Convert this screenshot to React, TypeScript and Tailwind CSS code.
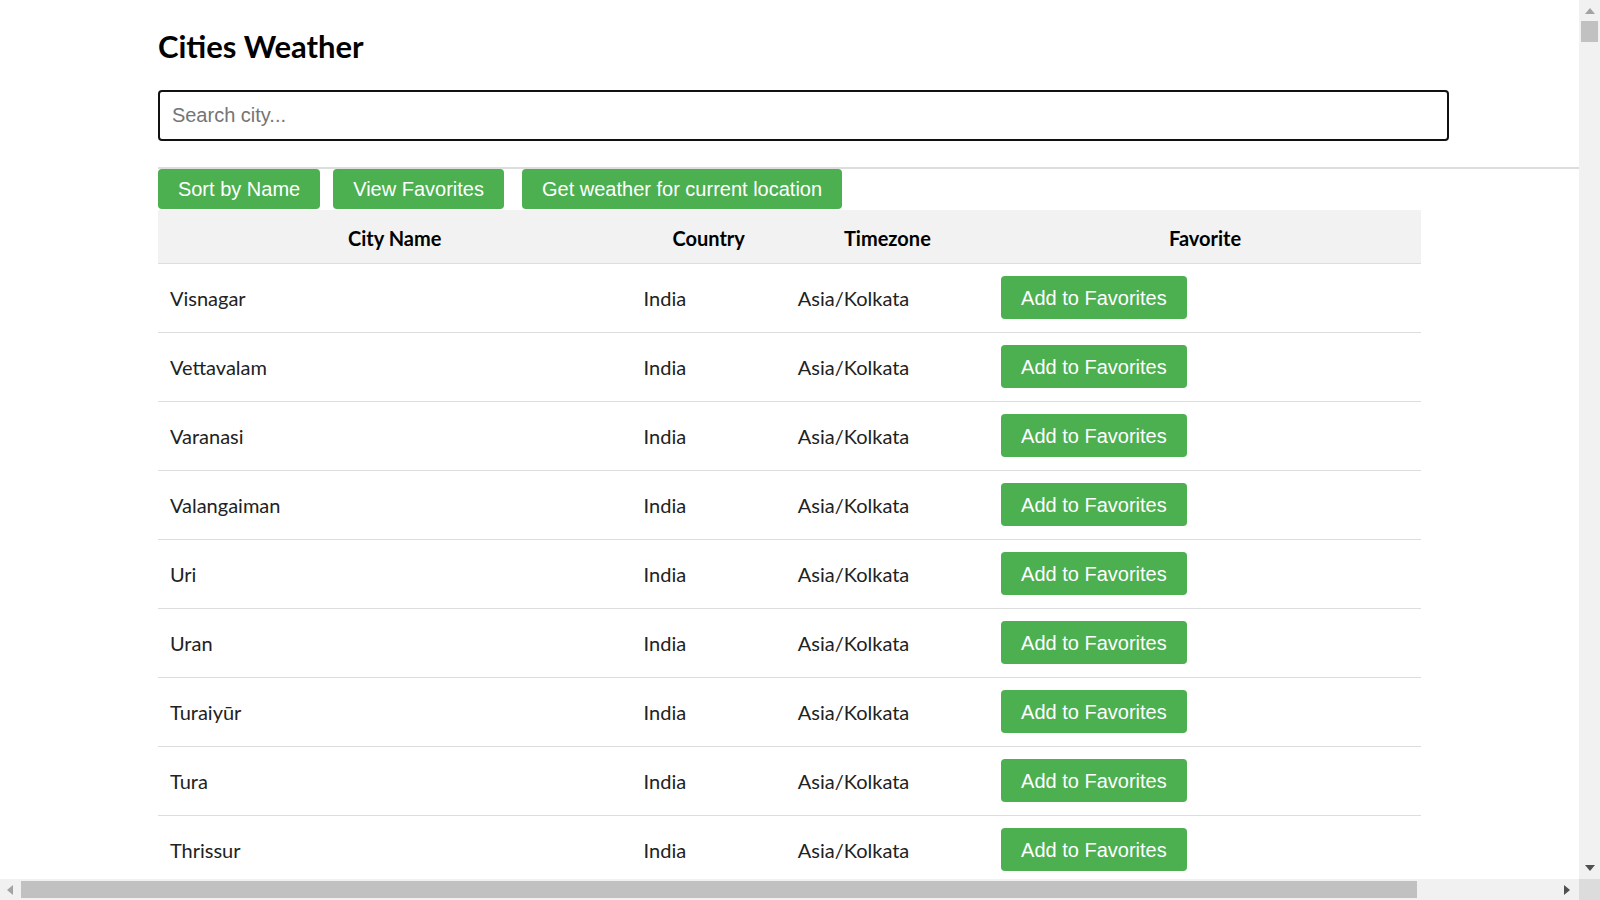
const cityNames = [
  "Visnagar",
  "Vettavalam",
  "Varanasi",
  "Valangaiman",
  "Uri",
  "Uran",
  "Turaiyūr",
  "Tura",
  "Thrissur",
  "Thoothukudi",
  "Thiruvananthapuram",
  "Thanjavur",
  "Thane",
  "Tezpur",
  "Tenkasi",
  "Surat",
  "Srinagar",
  "Sonipat",
  "Solapur",
  "Shimla",
  "Shillong",
  "Salem",
  "Rourkela",
  "Rewa",
  "Rajkot",
  "Raipur",
  "Pune",
  "Puducherry",
  "Patna",
  "Panaji",
];

// long list, so the page scrolls like the real one
const cities = Array.from({ length: 530 }, (_, i) => ({
  name: cityNames[i % cityNames.length],
  country: "India",
  timezone: "Asia/Kolkata",
}));

// window scrollbars as seen in the screenshot
function Scrollbars() {
  return (
    <>
      <div className="fixed top-0 right-0 w-[21px] h-[879px] bg-[#f1f1f1] flex flex-col items-center">
        <svg width="10" height="6" viewBox="0 0 10 6" className="mt-[8px]">
          <path d="M5 0L10 6H0z" fill="#a3a3a3" />
        </svg>
        <div className="mt-[7px] w-[17px] h-[21px] bg-[#c1c1c1]" />
        <div className="flex-1" />
        <svg width="10" height="6" viewBox="0 0 10 6" className="mb-[8px]">
          <path d="M0 0H10L5 6z" fill="#505050" />
        </svg>
      </div>
      <div className="fixed bottom-0 left-0 w-[1579px] h-[21px] bg-[#f1f1f1] flex items-center">
        <svg width="6" height="10" viewBox="0 0 6 10" className="ml-[7px]">
          <path d="M6 0V10L0 5z" fill="#a3a3a3" />
        </svg>
        <div className="ml-[8px] w-[1396px] h-[17px] bg-[#c1c1c1]" />
        <div className="flex-1" />
        <svg width="6" height="10" viewBox="0 0 6 10" className="mr-[9px]">
          <path d="M0 0L6 5L0 10z" fill="#505050" />
        </svg>
      </div>
      <div className="fixed bottom-0 right-0 w-[21px] h-[21px] bg-[#dcdcdc]" />
    </>
  );
}

function App() {
  return (
    <div className="w-[1579px] font-['Lato',sans-serif] text-[#222]">
      <div className="w-[80%] mx-auto">
        <h1 className="pt-[27px] text-[31px] leading-[38px] font-bold text-black">Cities Weather</h1>

        <input
          type="text"
          autoFocus
          placeholder="Search city..."
          className="box-content w-full mt-[25px] p-3 border-2 border-[#111] rounded-[4px] text-[20px] leading-[23px] font-['Liberation_Sans',Arial,sans-serif] placeholder:text-[#757575] outline-none"
        />

        <div className="w-[1600px] mt-[26px] border-t-2 border-[#ddd] flex">
          <button className="h-[40px] px-5 mr-[13px] bg-[#4CAF50] text-white text-[20px] rounded-[4px] font-['Liberation_Sans',Arial,sans-serif]">
            Sort by Name
          </button>
          <button className="h-[40px] px-5 mr-[18px] bg-[#4CAF50] text-white text-[20px] rounded-[4px] font-['Liberation_Sans',Arial,sans-serif]">
            View Favorites
          </button>
          <button className="h-[40px] px-5 bg-[#4CAF50] text-white text-[20px] rounded-[4px] font-['Liberation_Sans',Arial,sans-serif]">
            Get weather for current location
          </button>
        </div>

        <table className="w-full table-fixed border-collapse mt-px text-[20px]">
          <colgroup>
            <col className="w-[37.5%]" />
            <col className="w-[12.2%]" />
            <col className="w-[16.1%]" />
            <col className="w-[34.2%]" />
          </colgroup>
          <thead>
            <tr className="bg-[#f2f2f2] border-b border-[#ddd]">
              <th className="h-[53px] px-3 pt-1 text-center font-bold text-black">City Name</th>
              <th className="h-[53px] px-3 pt-1 text-center font-bold text-black">Country</th>
              <th className="h-[53px] px-3 pt-1 text-center font-bold text-black">Timezone</th>
              <th className="h-[53px] px-3 pt-1 text-center font-bold text-black">Favorite</th>
            </tr>
          </thead>
          <tbody>
            {cities.map((c, i) => (
              <tr key={i} className="border-b border-[#ddd]">
                <td className="h-[69px] px-3 align-middle">{c.name}</td>
                <td className="h-[69px] px-3 align-middle">{c.country}</td>
                <td className="h-[69px] px-3 align-middle">{c.timezone}</td>
                <td className="h-[69px] px-3 align-middle">
                  <button className="h-[43px] px-5 bg-[#4CAF50] text-white text-[20px] rounded-[4px] font-['Liberation_Sans',Arial,sans-serif]">
                    Add to Favorites
                  </button>
                </td>
              </tr>
            ))}
          </tbody>
        </table>
      </div>
      <Scrollbars />
    </div>
  );
}

export default App;
